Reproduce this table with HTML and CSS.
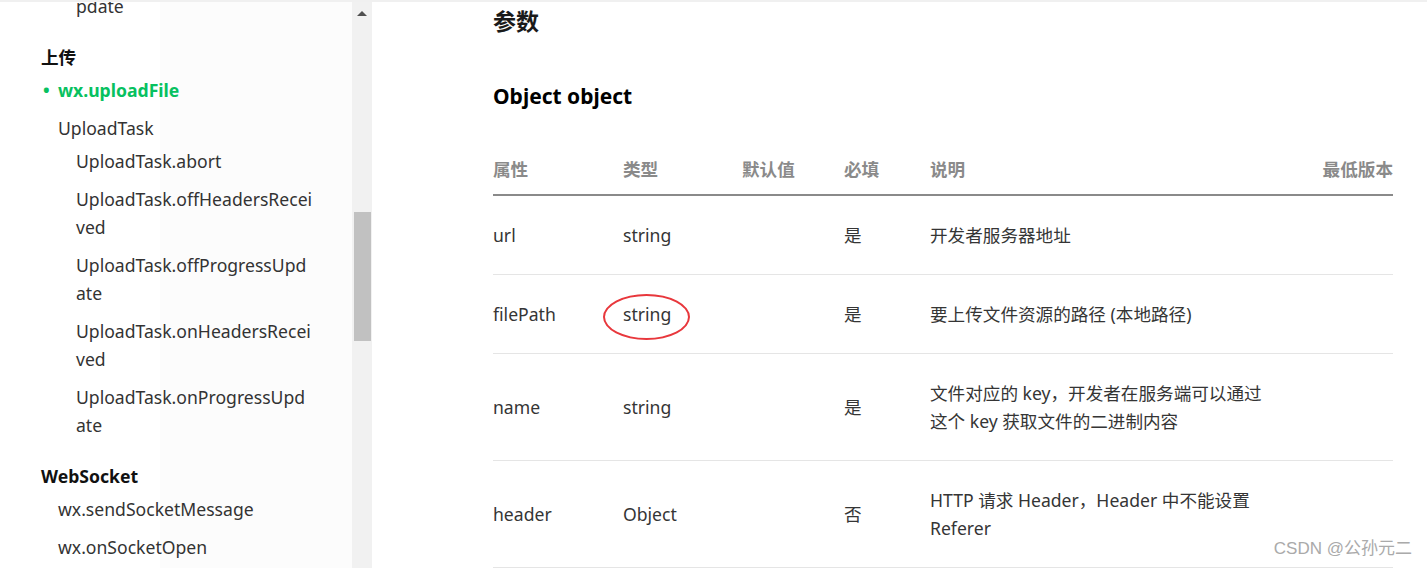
FILE: index.html
```html
<!DOCTYPE html>
<html lang="zh-CN">
<head>
<meta charset="utf-8">
<title>wx.uploadFile</title>
<link rel="stylesheet" href="styles.css">
</head>
<body>
<div class="page">
  <aside class="sidebar">
    <nav class="nav">
      <div class="nav-inner">
        <ul class="list list-prev">
          <li class="item"><ul class="list sub"><li class="item">pdate</li></ul></li>
        </ul>
        <div class="group">
          <div class="group-title">上传</div>
          <ul class="list">
            <li class="item active">wx.uploadFile</li>
            <li class="item">UploadTask
              <ul class="list sub">
                <li class="item">UploadTask.abort</li>
                <li class="item">UploadTask.offHeadersReceived</li>
                <li class="item">UploadTask.offProgressUpdate</li>
                <li class="item">UploadTask.onHeadersReceived</li>
                <li class="item">UploadTask.onProgressUpdate</li>
              </ul>
            </li>
          </ul>
        </div>
        <div class="group">
          <div class="group-title">WebSocket</div>
          <ul class="list">
            <li class="item">wx.sendSocketMessage</li>
            <li class="item">wx.onSocketOpen</li>
          </ul>
        </div>
      </div>
    </nav>
    <div class="scrollbar">
      <div class="arrow"></div>
      <div class="thumb"></div>
    </div>
  </aside>
  <main class="main">
    <h2 class="h2">参数</h2>
    <h3 class="h3">Object object</h3>
    <table class="params">
      <colgroup>
        <col class="c1"><col class="c2"><col class="c3"><col class="c4"><col class="c5"><col class="c6">
      </colgroup>
      <thead>
        <tr><th>属性</th><th>类型</th><th>默认值</th><th>必填</th><th>说明</th><th class="right">最低版本</th></tr>
      </thead>
      <tbody>
        <tr><td>url</td><td>string</td><td></td><td>是</td><td>开发者服务器地址</td><td></td></tr>
        <tr><td>filePath</td><td><span class="circled">string</span></td><td></td><td>是</td><td>要上传文件资源的路径 (本地路径)</td><td></td></tr>
        <tr><td>name</td><td>string</td><td></td><td>是</td><td>文件对应的 key，开发者在服务端可以通过这个 key 获取文件的二进制内容</td><td></td></tr>
        <tr><td>header</td><td>Object</td><td></td><td>否</td><td>HTTP 请求 Header，Header 中不能设置 Referer</td><td></td></tr>
      </tbody>
    </table>
    <div class="watermark">CSDN @公孙元二</div>
  </main>
</div>
</body>
</html>
```

FILE: styles.css
```css
* { box-sizing: border-box; }
html, body { margin: 0; padding: 0; }
body {
  font-family: "Noto Sans", "Noto Sans CJK SC", sans-serif;
  font-size: 17.6px;
  line-height: 28px;
  color: #353535;
  background: #fff;
  overflow: hidden;
}
.page {
  display: flex;
  height: 568px;
  border-top: 2px solid #f0f0f0;
  overflow: hidden;
}
.sidebar {
  display: flex;
  flex: 0 0 372px;
  height: 100%;
}
.nav {
  flex: 0 0 352px;
  height: 100%;
  overflow: hidden;
  background: linear-gradient(to right, #ffffff 160px, #fcfcfc 160px);
  padding: 0 39px 0 41px;
}
.nav-inner { margin-top: -20px; color: #333; }
.list { list-style: none; margin: 0; padding: 0; }
.item {
  padding: 5px 0 5px 17px;
  position: relative;
  word-break: break-all;
}
.sub .item { padding-left: 18px; }
.list > .item > .sub { margin-left: 0; padding-left: 0; }
.group { margin-top: 13px; }
.group-title { font-weight: bold; color: #111; }
.item.active { color: #07c160; font-weight: bold; }
.item.active::before {
  content: "•";
  position: absolute;
  left: 2px;
  top: 5px;
  font-weight: bold;
}
.scrollbar {
  flex: 0 0 20px;
  height: 100%;
  background: #f1f1f1;
  display: flex;
  flex-direction: column;
  align-items: center;
  padding-top: 9px;
}
.arrow {
  width: 0; height: 0;
  border-left: 5px solid transparent;
  border-right: 5px solid transparent;
  border-bottom: 5px solid #505050;
}
.thumb {
  width: 17px;
  height: 129px;
  margin-top: 196px;
  margin-left: 1px;
  background: #c1c1c1;
}
.main {
  flex: 1;
  position: relative;
  padding: 3px 0 0 121px;
}
.h2 {
  margin: 0;
  font-size: 23px;
  line-height: 32px;
  font-weight: bold;
  color: #1a1a1a;
}
.h3 {
  margin: 44px 0 0;
  font-size: 21px;
  line-height: 30px;
  font-weight: bold;
  color: #000;
}
.params {
  margin-top: 33px;
  width: 900px;
  border-collapse: collapse;
  table-layout: fixed;
}
.c1 { width: 130px; }
.c2 { width: 119px; }
.c3 { width: 102px; }
.c4 { width: 86px; }
.c5 { width: 340px; }
.c6 { width: 123px; }
.params th {
  text-align: left;
  font-weight: bold;
  color: #8a8a8a;
  padding: 11px 0;
  border-bottom: 2px solid #8a8a8a;
}
.params th.right { text-align: right; }
.params td {
  padding: 25px 0;
  border-bottom: 1px solid #e5e5e5;
  vertical-align: middle;
}
.circled { position: relative; display: inline-block; }
.circled::after {
  content: "";
  position: absolute;
  left: -20px;
  right: -19px;
  top: -6px;
  height: 42px;
  border: 2px solid #e8373c;
  border-radius: 50%;
}
.watermark {
  position: absolute;
  right: 15px;
  bottom: 9px;
  font-family: "Liberation Sans", "Noto Sans CJK SC", sans-serif;
  font-size: 17px;
  line-height: 20px;
  color: #aaaaaa;
}
```
